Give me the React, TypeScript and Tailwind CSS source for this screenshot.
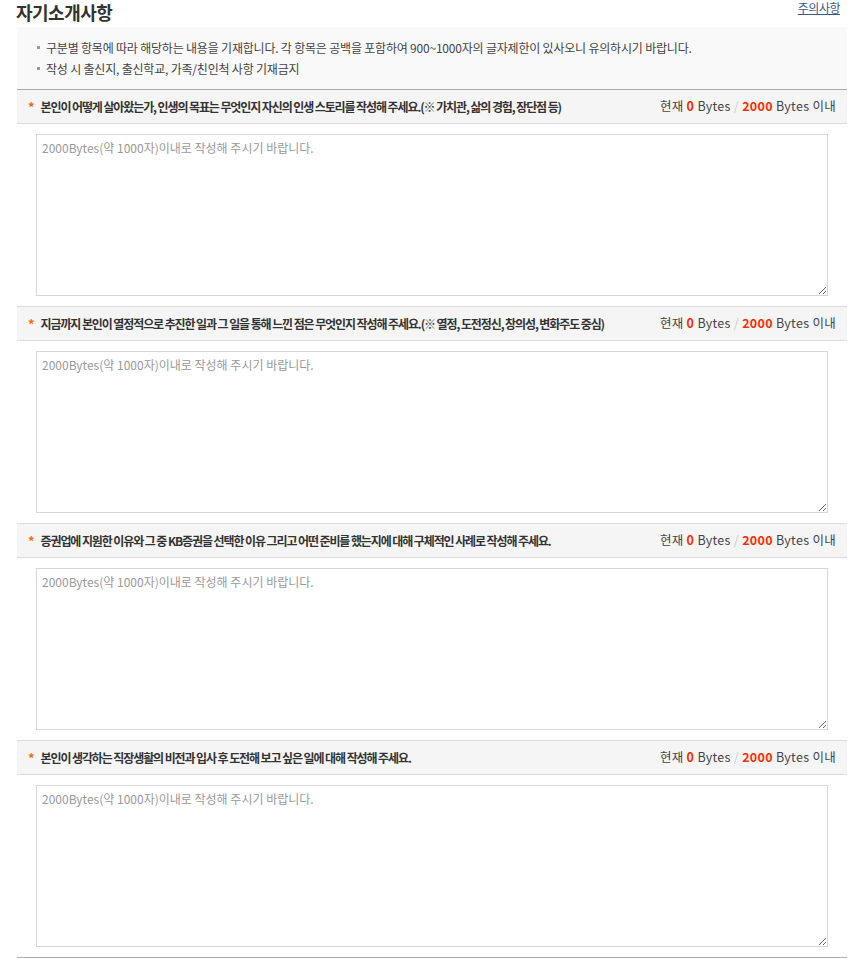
const questions = [
  '본인이 어떻게 살아왔는가, 인생의 목표는 무엇인지 자신의 인생 스토리를 작성해 주세요.(※ 가치관, 삶의 경험, 장단점 등)',
  '지금까지 본인이 열정적으로 추진한 일과 그 일을 통해 느낀 점은 무엇인지 작성해 주세요.(※ 열정, 도전정신, 창의성, 변화주도 중심)',
  '증권업에 지원한 이유와 그 중 KB증권을 선택한 이유 그리고 어떤 준비를 했는지에 대해 구체적인 사례로 작성해 주세요.',
  '본인이 생각하는 직장생활의 비전과 입사 후 도전해 보고 싶은 일에 대해 작성해 주세요.',
];

const font = { fontFamily: '"Noto Sans CJK KR", "Noto Sans", sans-serif' };

function Question({ text, first }: { text: string; first: boolean }) {
  return (
    <div className={first ? '' : 'border-t border-[#dddddd]'}>
      <div className="flex h-[34px] items-center justify-between border-b border-[#dddddd] bg-[#f5f5f5] pl-[11px] pr-[11px]">
        <p className="flex items-center text-[12px] font-bold tracking-[-1.1px] text-[#333333]">
          <span className="mr-[7px] text-[13px] text-[#ff6a00]">*</span>
          {text}
        </p>
        <p className="shrink-0 text-[12.5px] tracking-[0.3px] text-[#444444]">
          현재 <span className="font-bold text-[#ff2a00]">0</span> Bytes{' '}
          <span className="text-[#cccccc]">/</span>{' '}
          <span className="font-bold text-[#ff2a00]">2000</span> Bytes 이내
        </p>
      </div>
      <div className="px-[19px] py-[10px]">
        <textarea
          className="block h-[162px] w-full resize-y border border-[#d6d6d6] bg-white px-[5px] py-[4px] text-[12px] leading-[18px] text-[#333333] outline-none placeholder:text-[#999999]"
          placeholder="2000Bytes(약 1000자)이내로 작성해 주시기 바랍니다."
          style={font}
        />
      </div>
    </div>
  );
}

export default function App() {
  return (
    <div className="h-[958px] w-[857px] overflow-hidden bg-white" style={font}>
      <div className="flex h-[27px] items-start justify-between pl-[16px] pr-[17px]">
        <h2 className="text-[18px] font-bold leading-[24px] tracking-[-0.5px] text-[#333333]">자기소개사항</h2>
        <a href="#" className="text-[12px] leading-[16px] tracking-[-0.5px] text-[#3a5a8a] underline">
          주의사항
        </a>
      </div>
      <div className="ml-[17px] mr-[10px]">
        <div className="border-b border-[#aaaaaa] bg-[#f9f9f9] px-[20px] py-[10px]">
          {[
            '구분별 항목에 따라 해당하는 내용을 기재합니다. 각 항목은 공백을 포함하여 900~1000자의 글자제한이 있사오니 유의하시기 바랍니다.',
            '작성 시 출신지, 출신학교, 가족/친인척 사항 기재금지',
          ].map((t) => (
            <p key={t} className="flex items-center text-[12px] leading-[21px] tracking-[-0.2px] text-[#444444]">
              <span className="mr-[6px] inline-block h-[3px] w-[3px] bg-[#999999]" />
              {t}
            </p>
          ))}
        </div>
        {questions.map((q, i) => (
          <Question key={i} text={q} first={i === 0} />
        ))}
        <div className="border-t border-[#aaaaaa]" />
      </div>
    </div>
  );
}
